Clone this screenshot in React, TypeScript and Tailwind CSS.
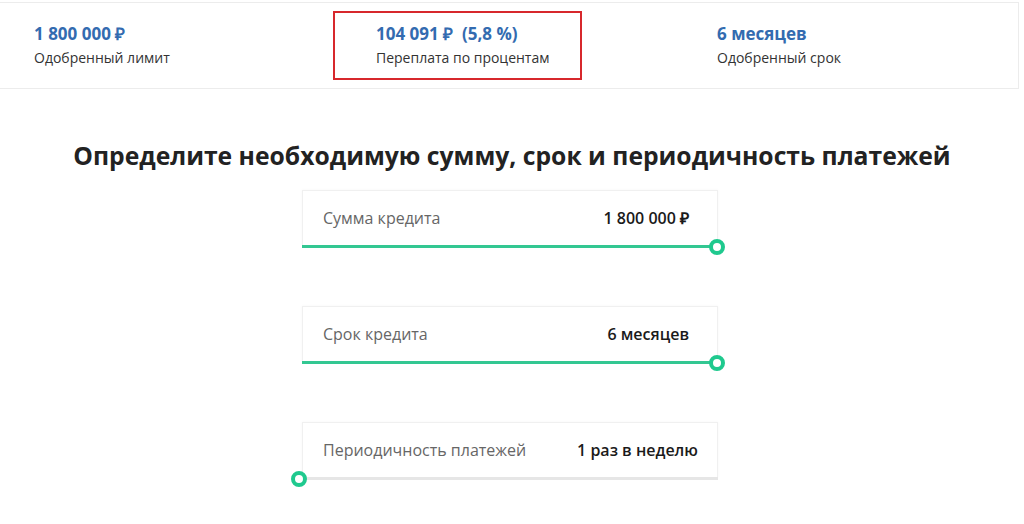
import React from "react";

const Stat: React.FC<{ value: string; label: string; boxed?: boolean }> = ({ value, label, boxed }) => (
  <div
    className={
      boxed
        ? "flex flex-col justify-center border-2 border-[#d7282c] w-[249px] h-[69px] pl-[41px]"
        : "flex flex-col justify-center h-[69px]"
    }
  >
    <span className="text-[17px] font-bold text-[#336bb0] leading-[22px] whitespace-pre">{value}</span>
    <span className="text-[14px] text-[#333] leading-[22px] mt-[2px]">{label}</span>
  </div>
);

const SliderCard: React.FC<{ label: string; value: string; percent: number; pr: string }> = ({
  label,
  value,
  percent,
  pr,
}) => (
  <div className="w-[416px]">
    <div
      className={`h-[55px] bg-white border-t border-r border-l border-[#f0f0f0] shadow-[0_0_3px_rgba(0,0,0,0.04)] flex items-center justify-between pl-[20px] ${pr}`}
    >
      <span className="text-[16px] text-[#666]">{label}</span>
      <span className="text-[16px] font-semibold text-[#1a1a1a]">{value}</span>
    </div>
    <div className="relative h-[3px] bg-[#e6e6e6]">
      <div className="h-full bg-[#33c792]" style={{ width: `${percent}%` }} />
      <div
        className="absolute top-1/2 w-[16px] h-[16px] -translate-x-1/2 -translate-y-1/2 rounded-full border-[4px] border-[#1fc98e] bg-white"
        style={{ left: percent === 0 ? "-3px" : "calc(100% - 1px)" }}
      />
    </div>
  </div>
);

export default function App() {
  return (
    <div className="min-h-[524px] bg-white font-['Open_Sans',sans-serif] pt-[2px]">
      <div className="bg-white border-t border-b border-r border-[#ececec] mr-[5px] h-[87px] flex items-center">
        <div className="w-[333px] pl-[34px]">
          <Stat value="1 800 000 ₽" label="Одобренный лимит" />
        </div>
        <div className="w-[384px]">
          <Stat value="104 091 ₽  (5,8 %)" label="Переплата по процентам" boxed />
        </div>
        <div>
          <Stat value="6 месяцев" label="Одобренный срок" />
        </div>
      </div>
      <h1 className="mt-[49px] text-center text-[24.7px] font-bold text-[#222] leading-[36px]">
        Определите необходимую сумму, срок и периодичность платежей
      </h1>
      <div className="flex flex-col items-start pl-[302px] mt-[16px] gap-[58px]">
        <SliderCard label="Сумма кредита" value="1 800 000 ₽" percent={100} pr="pr-[28px]" />
        <SliderCard label="Срок кредита" value="6 месяцев" percent={100} pr="pr-[28px]" />
        <SliderCard label="Периодичность платежей" value="1 раз в неделю" percent={0} pr="pr-[19px]" />
      </div>
    </div>
  );
}
